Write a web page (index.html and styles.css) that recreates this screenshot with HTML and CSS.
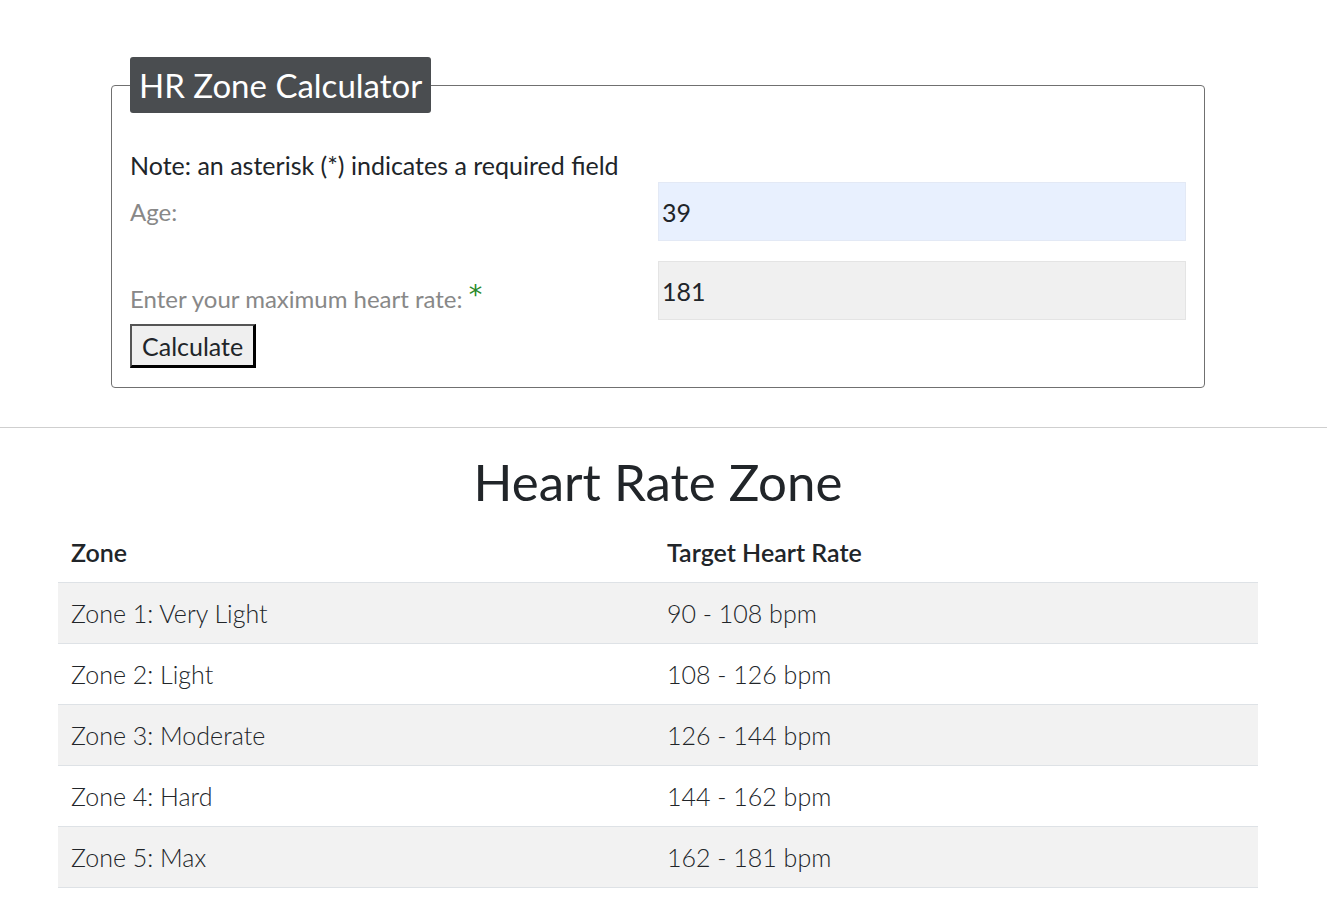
FILE: index.html
```html
<!DOCTYPE html>
<html lang="en">
<head>
<meta charset="utf-8">
<title>HR Zone Calculator</title>
<link rel="stylesheet" href="styles.css">
</head>
<body>
<div class="container">
  <fieldset class="calc">
    <legend class="calc-legend">HR Zone Calculator</legend>
    <p class="note">Note: an asterisk (*) indicates a required field</p>
    <div class="form-grid">
      <label class="lbl lbl-age" for="age">Age:</label>
      <input class="field field-auto" id="age" type="text" value="39">
      <label class="lbl lbl-max" for="max">Enter your maximum heart rate: <span class="req">*</span></label>
      <input class="field" id="max" type="text" value="181">
    </div>
    <button class="btn" type="button">Calculate</button>
  </fieldset>
</div>
<hr class="divider">
<div class="container">
  <h1 class="title">Heart Rate Zone</h1>
  <table class="zones">
    <thead>
      <tr><th class="col-zone">Zone</th><th>Target Heart Rate</th></tr>
    </thead>
    <tbody>
      <tr class="odd"><td>Zone 1: Very Light</td><td>90 - 108 bpm</td></tr>
      <tr><td>Zone 2: Light</td><td>108 - 126 bpm</td></tr>
      <tr class="odd"><td>Zone 3: Moderate</td><td>126 - 144 bpm</td></tr>
      <tr><td>Zone 4: Hard</td><td>144 - 162 bpm</td></tr>
      <tr class="odd"><td>Zone 5: Max</td><td>162 - 181 bpm</td></tr>
    </tbody>
  </table>
</div>
</body>
</html>
```
FILE: styles.css
```css
* { box-sizing: border-box; }
html, body { margin: 0; padding: 0; }
body {
  font-family: "Lato", "Noto Sans", sans-serif;
  color: #212529;
  background: #fff;
  padding: 57px 11px 0 0;
}
.container {
  width: 1200px;
  margin: 0 auto;
}
.calc {
  margin: 0 53px;
  border: 1px solid #707070;
  border-radius: 4px;
  padding: 36px 18px 19px 18px;
  min-width: 0;
}
.calc-legend {
  background: #4a4d50;
  color: #fff;
  font-size: 33px;
  line-height: 56px;
  height: 56px;
  padding: 0 9px;
  border-radius: 3px;
  margin: 0;
}
.note {
  font-size: 25px;
  margin: 0 0 1px 0;
  line-height: 32px;
  color: #212529;
}
.form-grid {
  display: grid;
  grid-template-columns: 1fr 1fr;
  row-gap: 20px;
}
.lbl {
  font-size: 24px;
  line-height: 30px;
  color: #888888;
}
.lbl-age { align-self: center; }
.lbl-max { align-self: end; padding-bottom: 6px; }
.req {
  color: #2a8a2a;
  font-family: "DejaVu Sans", sans-serif;
  font-size: 27px;
  vertical-align: 4px;
}
.field {
  height: 59px;
  font-family: inherit;
  font-size: 25px;
  color: #212529;
  border: 1px solid #e4e4e4;
  background: #f0f0f0;
  padding: 0 3px;
  margin: 0;
  width: 100%;
}
.field-auto { background: #e8f0fe; border-color: #e3e9f5; }
.btn {
  margin-top: 4px;
  display: block;
  font-family: inherit;
  font-size: 25px;
  color: #212529;
  background: #efefef;
  border-style: solid;
  border-width: 2px 3px 3px 2px;
  border-color: #555 #000 #000 #555;
  padding: 0 10px;
  height: 44px;
  width: 126px;
}
.divider {
  border: 0;
  border-top: 1px solid #cfcfcf;
  margin: 39px -11px 0 0;
}
.title {
  text-align: center;
  font-weight: 400;
  font-size: 51px;
  margin: 26px 0 12px;
  line-height: 56px;
}
.zones {
  width: 100%;
  border-collapse: collapse;
  font-size: 25px;
}
.zones th, .zones td {
  text-align: left;
  padding: 12px 13px;
  line-height: 36px;
  border-bottom: 1px solid #dee2e6;
}
.zones th { font-weight: 600; }
.col-zone { width: 596px; }
.zones td { font-weight: 300; }
.zones tr.odd td { background: #f2f2f2; }
```
